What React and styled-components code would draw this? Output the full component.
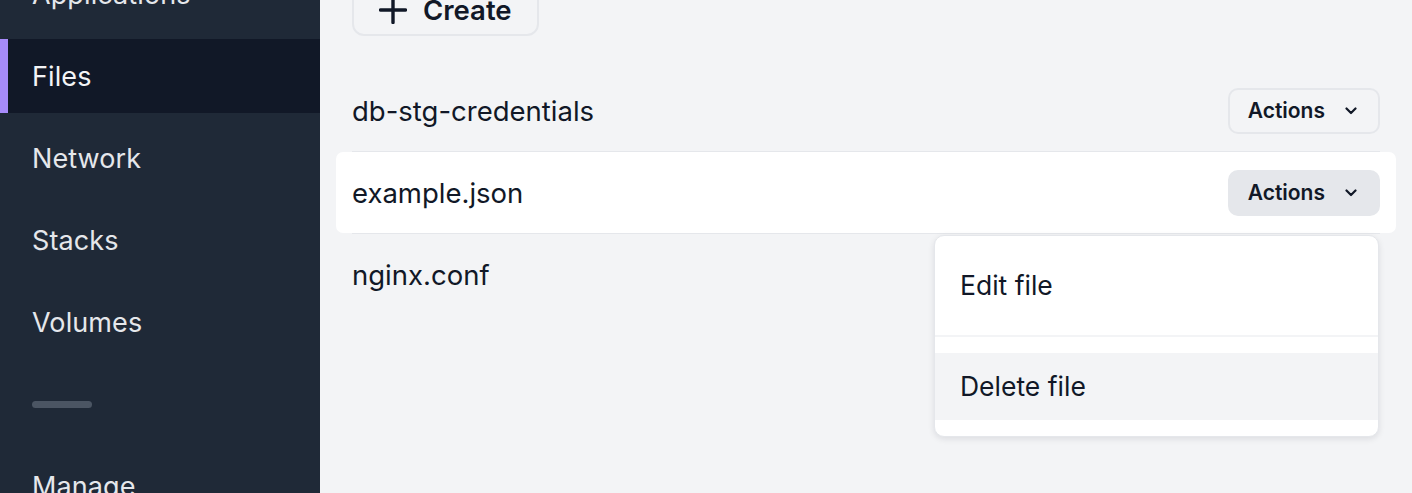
import React from "react";
import styled, { createGlobalStyle } from "styled-components";

const GlobalStyle = createGlobalStyle`
  html, body {
    margin: 0;
    padding: 0;
    height: 493px;
    overflow: hidden;
    background: #f3f4f6;
  }

  * {
    box-sizing: border-box;
  }

  body {
    font-family: Inter, "Noto Sans", "Liberation Sans", sans-serif;
    color: #111827;
  }
`;

const Viewport = styled.div`
  height: 493px;
  overflow: hidden;
`;

const Layout = styled.div`
  display: flex;
  margin-top: -43px;
  min-height: 640px;
`;

const Sidebar = styled.nav`
  width: 320px;
  flex-shrink: 0;
  background: #1f2937;
  display: flex;
  flex-direction: column;
  gap: 8px;
`;

const NavItem = styled.div`
  position: relative;
  height: 74px;
  display: flex;
  align-items: center;
  padding-left: 32px;
  font-size: 27px;
  letter-spacing: 0.1px;
  color: ${(p) => (p.$active ? "#f3f4f6" : "#e5e7eb")};
  background: ${(p) => (p.$active ? "#111827" : "transparent")};

  &::before {
    content: "";
    position: absolute;
    left: 0;
    top: 0;
    bottom: 0;
    width: 8px;
    background: ${(p) => (p.$active ? "#a78bfa" : "transparent")};
  }
`;

const NavDivider = styled.div`
  height: 74px;
  display: flex;
  align-items: center;
  padding-left: 32px;

  &::after {
    content: "";
    width: 60px;
    height: 7px;
    border-radius: 4px;
    background: #4b5563;
  }
`;

const Main = styled.main`
  flex: 1;
  padding: 27px 32px 0 32px;
`;

const CreateButton = styled.button`
  display: inline-flex;
  align-items: center;
  gap: 16px;
  height: 52px;
  padding: 0 25px 0 25px;
  border: 2px solid #e5e7eb;
  border-radius: 12px;
  background: transparent;
  font-family: inherit;
  font-size: 27.5px;
  font-weight: 600;
  color: #111827;
`;

const FileList = styled.ul`
  list-style: none;
  margin: 34px 0 0 0;
  padding: 0;
`;

const FileRow = styled.li`
  & + & {
    border-top: 1px solid #e5e7eb;
  }
`;

const RowInner = styled.div`
  height: 81px;
  display: flex;
  align-items: center;
  justify-content: space-between;
  margin: 0 -16px;
  padding: 0 16px;
  border-radius: 7px;
  background: ${(p) => (p.$highlight ? "#ffffff" : "transparent")};
`;

const FileName = styled.span`
  font-size: 27.5px;
  color: #111827;
`;

const ActionsWrap = styled.div`
  position: relative;
`;

const ActionsButton = styled.button`
  display: flex;
  align-items: center;
  gap: 20px;
  height: 46px;
  padding: 0 21px 0 18px;
  border-radius: 10px;
  border: 2px solid #e5e7eb;
  background: ${(p) => (p.$open ? "#e5e7eb" : "transparent")};
  font-family: inherit;
  font-size: 21px;
  font-weight: 600;
  color: #111827;
`;

const Menu = styled.div`
  position: absolute;
  top: calc(100% + 19px);
  right: 1px;
  width: 445px;
  background: #ffffff;
  border: 1px solid #e5e7eb;
  border-radius: 10px;
  box-shadow: 0 2px 6px rgba(17, 24, 39, 0.1);
  overflow: hidden;
  z-index: 10;
`;

const MenuGroup = styled.div`
  padding: 16px 0;

  & + & {
    border-top: 2px solid #f3f4f6;
  }
`;

const MenuItem = styled.div`
  height: 67px;
  display: flex;
  align-items: center;
  padding-left: 25px;
  font-size: 26.5px;
  color: #111827;
  background: ${(p) => (p.$hover ? "#f3f4f6" : "transparent")};
`;

const Chevron = () => (
  <svg width="12" height="8" viewBox="0 0 12 8" fill="none">
    <path
      d="M1.5 1.5 L6 6 L10.5 1.5"
      stroke="#111827"
      strokeWidth="2.2"
      strokeLinecap="round"
      strokeLinejoin="round"
    />
  </svg>
);

const PlusIcon = () => (
  <svg width="28" height="28" viewBox="0 0 28 28" fill="none">
    <path
      d="M14 1.5 V26.5 M1.5 14 H26.5"
      stroke="#111827"
      strokeWidth="3.4"
      strokeLinecap="round"
    />
  </svg>
);

const navItems = ["Applications", "Files", "Network", "Stacks", "Volumes"];
const files = ["db-stg-credentials", "example.json", "nginx.conf"];

export default function App() {
  return (
    <Viewport>
      <GlobalStyle />
      <Layout>
        <Sidebar>
          {navItems.map((item) => (
            <NavItem key={item} $active={item === "Files"}>
              {item}
            </NavItem>
          ))}
          <NavDivider />
          <NavItem>Manage</NavItem>
        </Sidebar>
        <Main>
          <CreateButton>
            <PlusIcon />
            Create
          </CreateButton>
          <FileList>
            {files.map((file, i) => {
              const open = file === "example.json";
              return (
                <FileRow key={file}>
                  <RowInner $highlight={open}>
                    <FileName>{file}</FileName>
                    {i < 2 && (
                      <ActionsWrap>
                        <ActionsButton $open={open}>
                          Actions
                          <Chevron />
                        </ActionsButton>
                        {open && (
                          <Menu>
                            <MenuGroup>
                              <MenuItem>Edit file</MenuItem>
                            </MenuGroup>
                            <MenuGroup>
                              <MenuItem $hover>Delete file</MenuItem>
                            </MenuGroup>
                          </Menu>
                        )}
                      </ActionsWrap>
                    )}
                  </RowInner>
                </FileRow>
              );
            })}
          </FileList>
        </Main>
      </Layout>
    </Viewport>
  );
}
